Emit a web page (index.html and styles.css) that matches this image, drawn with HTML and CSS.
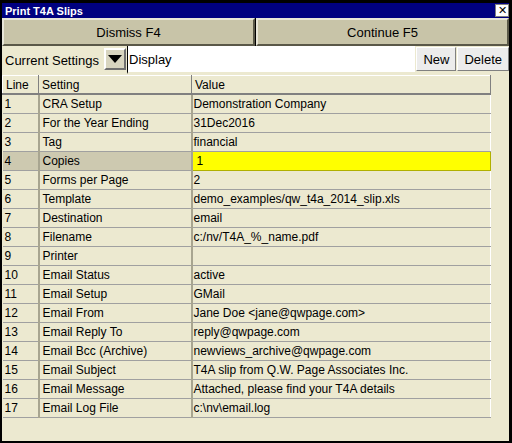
FILE: index.html
```html
<!DOCTYPE html>
<html lang="en">
<head>
    <meta charset="UTF-8">
    <title>Print T4A Slips</title>
    <link rel="stylesheet" href="styles.css">
</head>
<body>

<div class="window">
    <div class="titlebar">
        <span class="title">Print T4A Slips</span>
        <span class="close">&#10005;</span>
    </div>

    <div class="actions">
        <button class="action">Dismiss F4</button>
        <button class="action">Continue F5</button>
    </div>

    <div class="settings">
        <span class="settings-label">Current Settings</span>
        <span class="dropdown"><span class="arrow"></span></span>
        <div class="settings-input">Display</div>
        <button class="small-button">New</button>
        <button class="small-button">Delete</button>
    </div>

    <div class="grid-area">
        <table class="grid">
            <thead>
                <tr><th class="col-line">Line</th><th class="col-setting">Setting</th><th class="col-value">Value</th></tr>
            </thead>
            <tbody>
                <tr><td>1</td><td>CRA Setup</td><td>Demonstration Company</td></tr>
                <tr><td>2</td><td>For the Year Ending</td><td>31Dec2016</td></tr>
                <tr><td>3</td><td>Tag</td><td>financial</td></tr>
                <tr class="selected"><td>4</td><td>Copies</td><td class="current">1</td></tr>
                <tr><td>5</td><td>Forms per Page</td><td>2</td></tr>
                <tr><td>6</td><td>Template</td><td>demo_examples/qw_t4a_2014_slip.xls</td></tr>
                <tr><td>7</td><td>Destination</td><td>email</td></tr>
                <tr><td>8</td><td>Filename</td><td>c:/nv/T4A_%_name.pdf</td></tr>
                <tr><td>9</td><td>Printer</td><td></td></tr>
                <tr><td>10</td><td>Email Status</td><td>active</td></tr>
                <tr><td>11</td><td>Email Setup</td><td>GMail</td></tr>
                <tr><td>12</td><td>Email From</td><td>Jane Doe &lt;jane@qwpage.com&gt;</td></tr>
                <tr><td>13</td><td>Email Reply To</td><td>reply@qwpage.com</td></tr>
                <tr><td>14</td><td>Email Bcc (Archive)</td><td>newviews_archive@qwpage.com</td></tr>
                <tr><td>15</td><td>Email Subject</td><td>T4A slip from Q.W. Page Associates Inc.</td></tr>
                <tr><td>16</td><td>Email Message</td><td>Attached, please find your T4A details</td></tr>
                <tr><td>17</td><td>Email Log File</td><td>c:\nv\email.log</td></tr>
            </tbody>
        </table>
    </div>
</div>

</body>
</html>
```

FILE: styles.css
```css
body {
    margin: 0;
    padding: 0;
    background-color: #000000;
    font-family: 'Liberation Sans', Arial, sans-serif;
    color: #000000;
}
.window {
    box-sizing: border-box;
    width: 512px;
    height: 443px;
    padding: 2px 3px 2px 2px;
    background: #000000;
    display: flex;
    flex-direction: column;
}
.titlebar {
    height: 15px;
    margin-top: 1px;
    background: #000080;
    color: white;
    display: flex;
    align-items: center;
    justify-content: space-between;
    padding-left: 3px;
}
.title {
    font-weight: bold;
    font-size: 11px;
}
.close {
    box-sizing: border-box;
    width: 14px;
    height: 13px;
    background: white;
    color: black;
    border: 1px solid #808080;
    font-size: 11px;
    line-height: 11px;
    text-align: center;
}
.actions {
    display: flex;
    height: 28px;
    background: #000000;
}
.action {
    flex: 1;
    margin: 0;
    font-family: 'Liberation Sans', Arial, sans-serif;
    font-size: 13px;
    color: #000000;
    background: #c8c4a8;
    border: 2px solid;
    border-color: #e8e6d8 #5a5848 #5a5848 #e8e6d8;
}
.action + .action {
    margin-left: 1px;
}
.settings {
    display: flex;
    align-items: stretch;
    height: 28px;
    background: #ece9d0;
}
.settings-label {
    display: flex;
    align-items: center;
    padding-left: 3px;
    width: 99px;
    font-size: 13px;
}
.dropdown {
    box-sizing: border-box;
    width: 22px;
    margin: 2px 1px 4px 0;
    background: #d8d5c0;
    border: 2px solid;
    border-color: #ffffff #707070 #707070 #ffffff;
    display: flex;
    align-items: center;
    justify-content: center;
}
.arrow {
    width: 0;
    height: 0;
    border-left: 7px solid transparent;
    border-right: 7px solid transparent;
    border-top: 8px solid #000000;
}
.settings-input {
    flex: 1;
    background: #ffffff;
    border-left: 1px solid #000000;
    border-bottom: 2px solid #ece9d0;
    display: flex;
    align-items: center;
    padding-left: 1px;
    font-size: 13px;
}
.small-button {
    margin: 1px 0 3px 1px;
    padding: 0 6px;
    font-family: 'Liberation Sans', Arial, sans-serif;
    font-size: 13px;
    color: #000000;
    background: #ececec;
    border: 1px solid;
    border-color: #ffffff #808080 #808080 #ffffff;
}
.grid-area {
    flex: 1;
    background: #ece9d0;
    padding-top: 1px;
}
.grid {
    border-collapse: collapse;
    width: 489px;
    font-size: 12px;
}
.grid th {
    height: 17px;
    padding: 0 0 0 3px;
    text-align: left;
    font-weight: normal;
    background: #ece9d0;
    border-top: 1px solid #ffffff;
    border-left: 1px solid #ffffff;
    border-right: 1px solid #808080;
    border-bottom: 2px solid #808080;
}
.col-line {
    width: 32px;
}
.col-setting {
    width: 149px;
}
.grid td {
    height: 18px;
    padding: 0 0 0 1px;
    white-space: nowrap;
    border-bottom: 1px solid #a0a0a0;
    border-top: 1px solid #ffffff;
    border-right: 2px solid #a8a590;
}
.grid td:first-child {
    padding-left: 2px;
}
.grid td:nth-child(2) {
    padding-left: 3px;
}
.grid td:last-child {
    border-right: 1px solid #ffffff;
}
.grid tr.selected td {
    background: #cdc9b0;
}
.grid tr.selected td.current {
    background: #ffff00;
    padding-left: 4px;
    border: 1px solid #b0b000;
}
```
